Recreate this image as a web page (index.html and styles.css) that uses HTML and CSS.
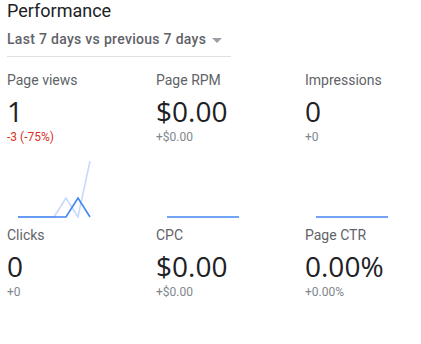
FILE: index.html
```html
<!DOCTYPE html>
<html lang="en">
<head>
<meta charset="UTF-8">
<meta name="viewport" content="width=device-width, initial-scale=1.0">
<title>Performance</title>
<link rel="stylesheet" href="styles.css">
</head>
<body>
<div class="card">
    <div class="header">
        <h2 class="title">Performance</h2>
        <div class="range">Last 7 days vs previous 7 days <span class="caret"></span></div>
    </div>

    <div class="metrics">
        <div class="metric">
            <div class="label">Page views</div>
            <div class="value">1</div>
            <div class="delta down">-3 (-75%)</div>
            <svg class="spark" width="90" height="80" viewBox="0 0 90 80">
                <polyline class="prev" points="11,72 23,72 35,72 47,72 59,53 71,72 83,16"/>
                <polyline class="cur" points="11,72 23,72 35,72 47,72 59,72 71,53 83,72"/>
            </svg>
        </div>
        <div class="metric">
            <div class="label">Page RPM</div>
            <div class="value">$0.00</div>
            <div class="delta">+$0.00</div>
            <svg class="spark" width="90" height="80" viewBox="0 0 90 80">
                <polyline class="cur" points="11,72 83,72"/>
            </svg>
        </div>
        <div class="metric">
            <div class="label">Impressions</div>
            <div class="value">0</div>
            <div class="delta">+0</div>
            <svg class="spark" width="90" height="80" viewBox="0 0 90 80">
                <polyline class="cur" points="11,72 83,72"/>
            </svg>
        </div>

        <div class="metric">
            <div class="label">Clicks</div>
            <div class="value">0</div>
            <div class="delta">+0</div>
        </div>
        <div class="metric">
            <div class="label">CPC</div>
            <div class="value">$0.00</div>
            <div class="delta">+$0.00</div>
        </div>
        <div class="metric">
            <div class="label">Page CTR</div>
            <div class="value">0.00%</div>
            <div class="delta">+0.00%</div>
        </div>
    </div>
</div>
</body>
</html>
```

FILE: styles.css
```css
body { margin: 0; background: #fff; font-family: Roboto, "Liberation Sans", sans-serif; color: #202124; }
.card { padding: 0 7px; }

.header { width: 224px; padding-bottom: 7px; border-bottom: 1px solid #e0e0e0; }
.title { margin: 0; font-size: 18px; font-weight: 400; line-height: 22px; }
.range { margin-top: 7px; font-size: 14px; font-weight: 500; line-height: 20px; letter-spacing: 0.3px; color: #5f6368; }
.caret { display: inline-block; width: 0; height: 0; margin-left: 2px; vertical-align: middle;
    border-left: 5px solid transparent; border-right: 5px solid transparent; border-top: 5px solid #9aa0a6; }

.metrics { display: grid; grid-template-columns: 149px 149px 1fr; padding-top: 13px; }
.metric { height: 155px; }
.metric:nth-child(n+4) { height: auto; }
.label { font-size: 14px; line-height: 20px; color: #5f6368; }
.value { margin-top: 3px; font-family: "Open Sans", Roboto, sans-serif; font-size: 28px; line-height: 36px; color: #202124; }
.delta { font-size: 12px; line-height: 16px; color: #80868b; }
.delta.down { color: #d93025; }

.spark { display: block; }
.spark polyline { fill: none; stroke-width: 1.6; stroke-linejoin: miter; }
.spark .prev { stroke: #c6dafc; }
.spark .cur { stroke: #4285f4; }
```
